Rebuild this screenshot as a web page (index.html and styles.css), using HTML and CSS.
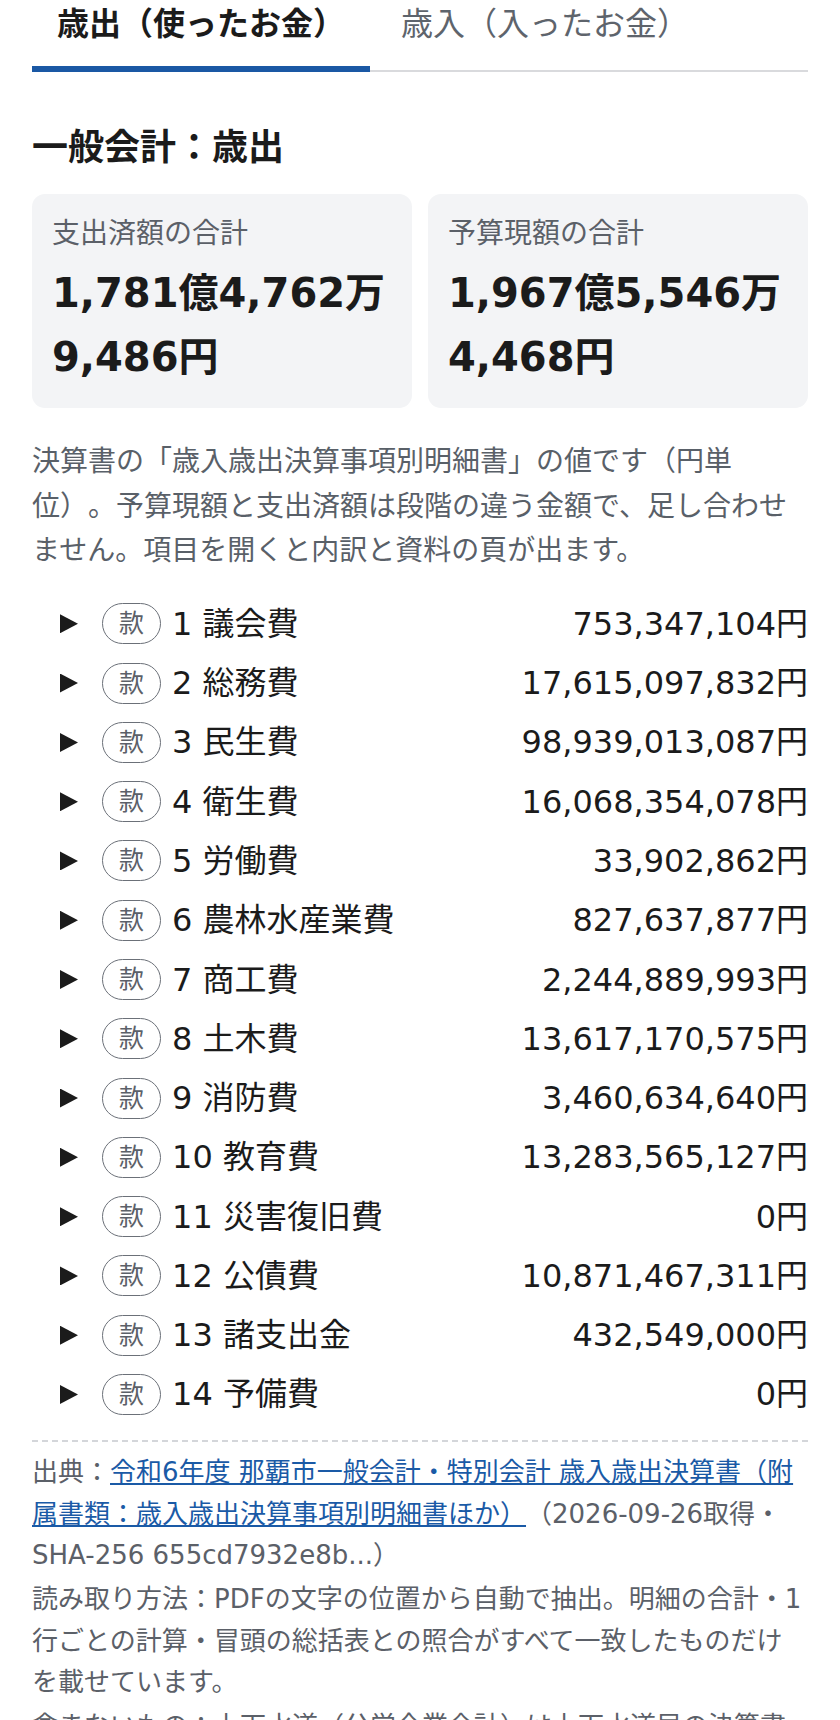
FILE: index.html
```html
<!DOCTYPE html>
<html lang="ja">
<head>
<meta charset="utf-8">
<title>一般会計：歳出</title>
<link rel="stylesheet" href="styles.css">
</head>
<body>
<main class="page">
  <nav class="tabs">
    <div class="tab active">歳出（使ったお金）</div>
    <div class="tab">歳入（入ったお金）</div>
  </nav>

  <h2 class="title">一般会計：歳出</h2>

  <section class="cards">
    <div class="card">
      <div class="card-label">支出済額の合計</div>
      <div class="card-value">1,781億4,762万9,486円</div>
    </div>
    <div class="card">
      <div class="card-label">予算現額の合計</div>
      <div class="card-value">1,967億5,546万4,468円</div>
    </div>
  </section>

  <p class="note">決算書の「歳入歳出決算事項別明細書」の値です（円単位）。予算現額と支出済額は段階の違う金額で、足し合わせません。項目を開くと内訳と資料の頁が出ます。</p>

  <div class="items">
    <details class="item"><summary><span class="tri"></span><span class="badge">款</span><span class="name">1 議会費</span><span class="amount">753,347,104円</span></summary></details>
    <details class="item"><summary><span class="tri"></span><span class="badge">款</span><span class="name">2 総務費</span><span class="amount">17,615,097,832円</span></summary></details>
    <details class="item"><summary><span class="tri"></span><span class="badge">款</span><span class="name">3 民生費</span><span class="amount">98,939,013,087円</span></summary></details>
    <details class="item"><summary><span class="tri"></span><span class="badge">款</span><span class="name">4 衛生費</span><span class="amount">16,068,354,078円</span></summary></details>
    <details class="item"><summary><span class="tri"></span><span class="badge">款</span><span class="name">5 労働費</span><span class="amount">33,902,862円</span></summary></details>
    <details class="item"><summary><span class="tri"></span><span class="badge">款</span><span class="name">6 農林水産業費</span><span class="amount">827,637,877円</span></summary></details>
    <details class="item"><summary><span class="tri"></span><span class="badge">款</span><span class="name">7 商工費</span><span class="amount">2,244,889,993円</span></summary></details>
    <details class="item"><summary><span class="tri"></span><span class="badge">款</span><span class="name">8 土木費</span><span class="amount">13,617,170,575円</span></summary></details>
    <details class="item"><summary><span class="tri"></span><span class="badge">款</span><span class="name">9 消防費</span><span class="amount">3,460,634,640円</span></summary></details>
    <details class="item"><summary><span class="tri"></span><span class="badge">款</span><span class="name">10 教育費</span><span class="amount">13,283,565,127円</span></summary></details>
    <details class="item"><summary><span class="tri"></span><span class="badge">款</span><span class="name">11 災害復旧費</span><span class="amount">0円</span></summary></details>
    <details class="item"><summary><span class="tri"></span><span class="badge">款</span><span class="name">12 公債費</span><span class="amount">10,871,467,311円</span></summary></details>
    <details class="item"><summary><span class="tri"></span><span class="badge">款</span><span class="name">13 諸支出金</span><span class="amount">432,549,000円</span></summary></details>
    <details class="item"><summary><span class="tri"></span><span class="badge">款</span><span class="name">14 予備費</span><span class="amount">0円</span></summary></details>
  </div>

  <footer class="source">
    <p>出典：<a href="#">令和6年度 那覇市一般会計・特別会計 歳入歳出決算書（附属書類：歳入歳出決算事項別明細書ほか）</a>（2026-09-26取得・SHA-256 655cd7932e8b...）</p>
    <p>読み取り方法：PDFの文字の位置から自動で抽出。明細の合計・1行ごとの計算・冒頭の総括表との照合がすべて一致したものだけを載せています。</p>
    <p>含まないもの：上下水道（公営企業会計）は上下水道局の決算書に載っています。</p>
  </footer>
</main>
</body>
</html>
```

FILE: styles.css
```css
* {
  box-sizing: border-box;
}

html {
  text-spacing-trim: space-all;
}

body {
  margin: 0;
  font-family: "DejaVu Sans", "Noto Sans CJK JP", sans-serif;
  color: #1b1b1b;
  background: #ffffff;
  text-spacing-trim: space-all;
}

.page {
  padding: 0 32px;
}

/* Tabs */
.tabs {
  display: flex;
  gap: 6px;
  border-bottom: 2px solid #d9dadd;
}

.tab {
  font-size: 32px;
  line-height: 48px;
  padding: 0 25px 18px;
  border-bottom: 6px solid transparent;
  margin-bottom: -2px;
  color: #5e646c;
}

.tab.active {
  color: #1b1b1b;
  font-weight: 700;
  border-bottom-color: #1a58a4;
}

/* Heading */
.title {
  font-size: 36px;
  font-weight: 700;
  line-height: 50px;
  margin: 51px 0 21px;
}

/* Summary cards */
.cards {
  display: grid;
  grid-template-columns: 1fr 1fr;
  gap: 16px;
}

.card {
  background: #f3f4f6;
  border-radius: 13px;
  padding: 18px 20px 19px;
}

.card-label {
  font-size: 28px;
  line-height: 44.8px;
  color: #5b6068;
  margin-bottom: 4px;
}

.card-value {
  font-size: 40px;
  font-weight: 700;
  line-height: 64px;
}

/* Note */
.note {
  font-size: 28px;
  line-height: 1.6;
  color: #596068;
  margin: 32px 0 20px;
}

/* Items */
.items {
  margin: 0;
  padding: 0;
}

.item summary {
  display: flex;
  align-items: center;
  padding: 5.65px 0 5.65px 28px;
  font-size: 32px;
  line-height: 48px;
  list-style: none;
  cursor: pointer;
}

.item summary::-webkit-details-marker {
  display: none;
}

.tri {
  flex: none;
  width: 18px;
  height: 19px;
  margin-right: 24px;
  background: #1b1b1b;
  clip-path: polygon(0 0, 100% 50%, 0 100%);
}

.badge {
  flex: none;
  font-size: 25px;
  line-height: 39px;
  padding: 0 16px;
  border: 1.5px solid #6b7078;
  border-radius: 999px;
  color: #5b6068;
  margin-right: 11px;
}

.name {
  flex: 1;
}

.amount {
  text-align: right;
}

/* Source */
.source {
  border-top: 2px dashed #d4d6da;
  margin-top: 16px;
  padding-top: 10px;
  font-size: 26px;
  line-height: 1.6;
  color: #5b6068;
}

.source p {
  margin: 0 0 2px;
}

.source a {
  color: #1a5aa6;
}
```
